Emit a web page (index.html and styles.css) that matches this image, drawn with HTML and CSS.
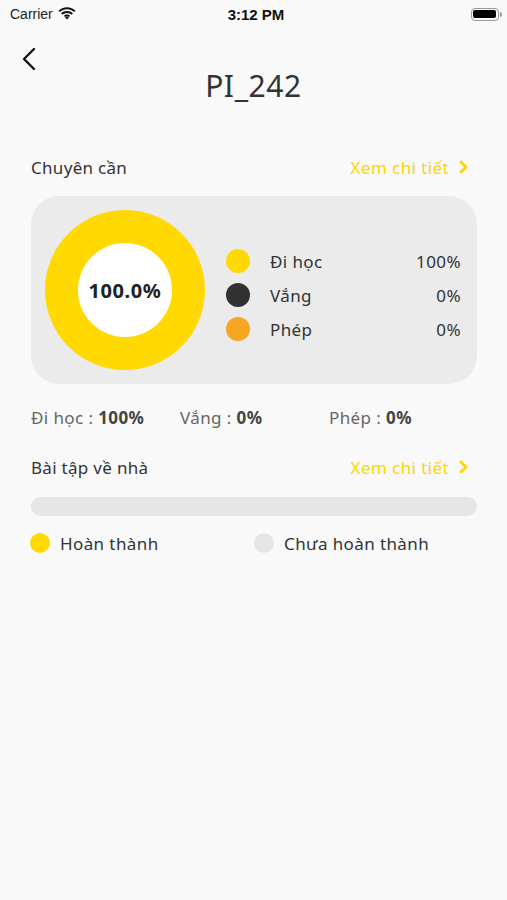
FILE: index.html
```html
<!DOCTYPE html>
<html lang="vi">
<head>
<meta charset="utf-8">
<link rel="stylesheet" href="styles.css">
</head>
<body>
<div class="screen">
  <div class="status">
    <div class="status-left">
      <span class="carrier">Carrier</span>
      <svg class="wifi" width="18" height="13" viewBox="0 0 18 13"><path d="M9 2.2c2.8 0 5.3 1.1 7.2 2.9l1.3-1.4C15.3 1.6 12.3.3 9 .3S2.7 1.6.5 3.7l1.3 1.4C3.7 3.3 6.2 2.2 9 2.2z" fill="#111"/><path d="M9 5.9c1.8 0 3.4.7 4.6 1.8l1.3-1.4C13.4 4.9 11.3 4 9 4S4.6 4.9 3.1 6.3l1.3 1.4C5.6 6.6 7.2 5.9 9 5.9z" fill="#111"/><path d="M9 9.5c.8 0 1.5.3 2 .8L9 12.5l-2-2.2c.5-.5 1.2-.8 2-.8z" fill="#111"/><path d="M9 7.6c1.2 0 2.3.5 3.1 1.2L11 10.1c-.5-.5-1.2-.8-2-.8s-1.5.3-2 .8L5.9 8.8C6.7 8.1 7.8 7.6 9 7.6z" fill="#111"/></svg>
    </div>
    <div class="time">3:12 PM</div>
    <div class="status-right">
      <div class="battery"><div class="battery-fill"></div></div><div class="battery-cap"></div>
    </div>
  </div>

  <div class="nav">
    <svg class="back" width="16" height="24" viewBox="0 0 16 24"><path d="M13 2L3 12l10 10" fill="none" stroke="#111" stroke-width="2.4" stroke-linecap="round" stroke-linejoin="round"/></svg>
  </div>
  <h1 class="title">PI_242</h1>

  <div class="section-head">
    <span class="section-title">Chuyên cần</span>
    <span class="more">Xem chi tiết <svg width="10" height="14" viewBox="0 0 10 14"><path d="M2 2l5 5-5 5" fill="none" stroke="#FFD400" stroke-width="2.8" stroke-linecap="round" stroke-linejoin="round"/></svg></span>
  </div>

  <div class="card">
    <div class="donut"><div class="donut-hole">100.0%</div></div>
    <div class="legend">
      <div class="legend-row"><span class="dot dot-yellow"></span><span class="legend-label">Đi học</span><span class="legend-value">100%</span></div>
      <div class="legend-row"><span class="dot dot-dark"></span><span class="legend-label">Vắng</span><span class="legend-value">0%</span></div>
      <div class="legend-row"><span class="dot dot-orange"></span><span class="legend-label">Phép</span><span class="legend-value">0%</span></div>
    </div>
  </div>

  <div class="summary">
    <span class="sum-item">Đi học : <b>100%</b></span>
    <span class="sum-item">Vắng : <b>0%</b></span>
    <span class="sum-item">Phép : <b>0%</b></span>
  </div>

  <div class="section-head hw-head">
    <span class="section-title">Bài tập về nhà</span>
    <span class="more">Xem chi tiết <svg width="10" height="14" viewBox="0 0 10 14"><path d="M2 2l5 5-5 5" fill="none" stroke="#FFD400" stroke-width="2.8" stroke-linecap="round" stroke-linejoin="round"/></svg></span>
  </div>

  <div class="progress"></div>

  <div class="hw-legend">
    <div class="hw-item"><span class="sdot dot-yellow"></span>Hoàn thành</div>
    <div class="hw-item"><span class="sdot dot-gray"></span>Chưa hoàn thành</div>
  </div>
</div>
</body>
</html>
```

FILE: styles.css
```css
* { box-sizing: border-box; }
html, body { margin: 0; padding: 0; }
body {
  background: #f9f9f9;
  font-family: "Noto Sans", "Open Sans", sans-serif;
  color: #333;
  width: 507px;
  height: 900px;
  overflow: hidden;
}
.screen { padding: 0; }

.status {
  height: 28px;
  display: flex;
  align-items: center;
  justify-content: space-between;
  padding: 0 5px 0 10px;
  font-family: "Liberation Sans", Arial, sans-serif;
}
.status-left { display: flex; align-items: center; gap: 5px; width: 120px; }
.carrier { font-size: 14px; color: #222; }
.wifi { margin-top: -2px; }
.time { font-size: 15px; font-weight: bold; color: #111; }
.status-right { width: 120px; display: flex; justify-content: flex-end; align-items: center; }
.battery {
  width: 28px; height: 13px; border: 1.5px solid #999; border-radius: 4px; padding: 1.5px;
}
.battery-fill { width: 100%; height: 100%; background: #000; border-radius: 2px; }
.battery-cap { width: 2px; height: 5px; background: #999; border-radius: 0 2px 2px 0; margin-left: 1px; }

.nav { height: 34px; padding: 19px 0 0 21px; }
.back { display: block; }
.title {
  margin: 0;
  text-align: center;
  font-size: 30px;
  font-weight: 400;
  color: #333;
  line-height: 40px;
  margin-top: 4px;
  letter-spacing: 0.6px;
}

.section-head {
  display: flex;
  justify-content: space-between;
  align-items: center;
  padding: 0 38px 0 31px;
  margin-top: 46px;
  height: 30px;
}
.section-title { font-size: 17px; color: #333; letter-spacing: 0.3px; }
.more { font-size: 17px; color: #FFD400; display: flex; align-items: center; gap: 10px; letter-spacing: 0.4px; }
.more svg { display: block; }

.card {
  margin: 14px 30px 0 31px;
  height: 188px;
  background: #ebebeb;
  border-radius: 28px;
  display: flex;
  align-items: center;
  padding: 0 16px 0 14px;
}
.donut {
  width: 160px; height: 160px; border-radius: 50%;
  background: #FFD900;
  display: flex; align-items: center; justify-content: center;
  flex: none;
}
.donut-hole {
  width: 94px; height: 94px; border-radius: 50%;
  background: #fff;
  display: flex; align-items: center; justify-content: center;
  font-size: 20px; font-weight: 700; color: #222; letter-spacing: 0.6px;
}
.legend { flex: 1; margin-left: 21px; padding-top: 10px; display: flex; flex-direction: column; gap: 10px; }
.legend-row { display: flex; align-items: center; height: 24px; }
.dot { width: 24px; height: 24px; border-radius: 50%; flex: none; }
.dot-yellow { background: #FFD900; }
.dot-dark { background: #333033; }
.dot-orange { background: #F5A623; }
.dot-gray { background: #e6e6e6; }
.legend-label { margin-left: 20px; font-size: 17px; color: #333; flex: 1; letter-spacing: 0.4px; }
.legend-value { font-size: 17px; color: #333; letter-spacing: 0.4px; }

.summary {
  display: grid;
  grid-template-columns: 149px 149px 1fr;
  padding: 0 0 0 31px;
  margin-top: 22px;
  font-size: 17px;
  color: #666;
  line-height: 24px;
  letter-spacing: 0.4px;
}
.summary b { color: #444; font-weight: 700; }

.hw-head { margin-top: 22px; }

.progress {
  margin: 15px 30px 0 31px;
  height: 19px;
  border-radius: 10px;
  background: #e6e6e6;
}

.hw-legend {
  display: grid;
  grid-template-columns: 224px 1fr;
  padding-left: 30px;
  margin-top: 16px;
  font-size: 17px;
  color: #333;
  letter-spacing: 0.4px;
}
.hw-item { display: flex; align-items: center; gap: 10px; height: 22px; }
.sdot { width: 20px; height: 20px; border-radius: 50%; flex: none; }
```
